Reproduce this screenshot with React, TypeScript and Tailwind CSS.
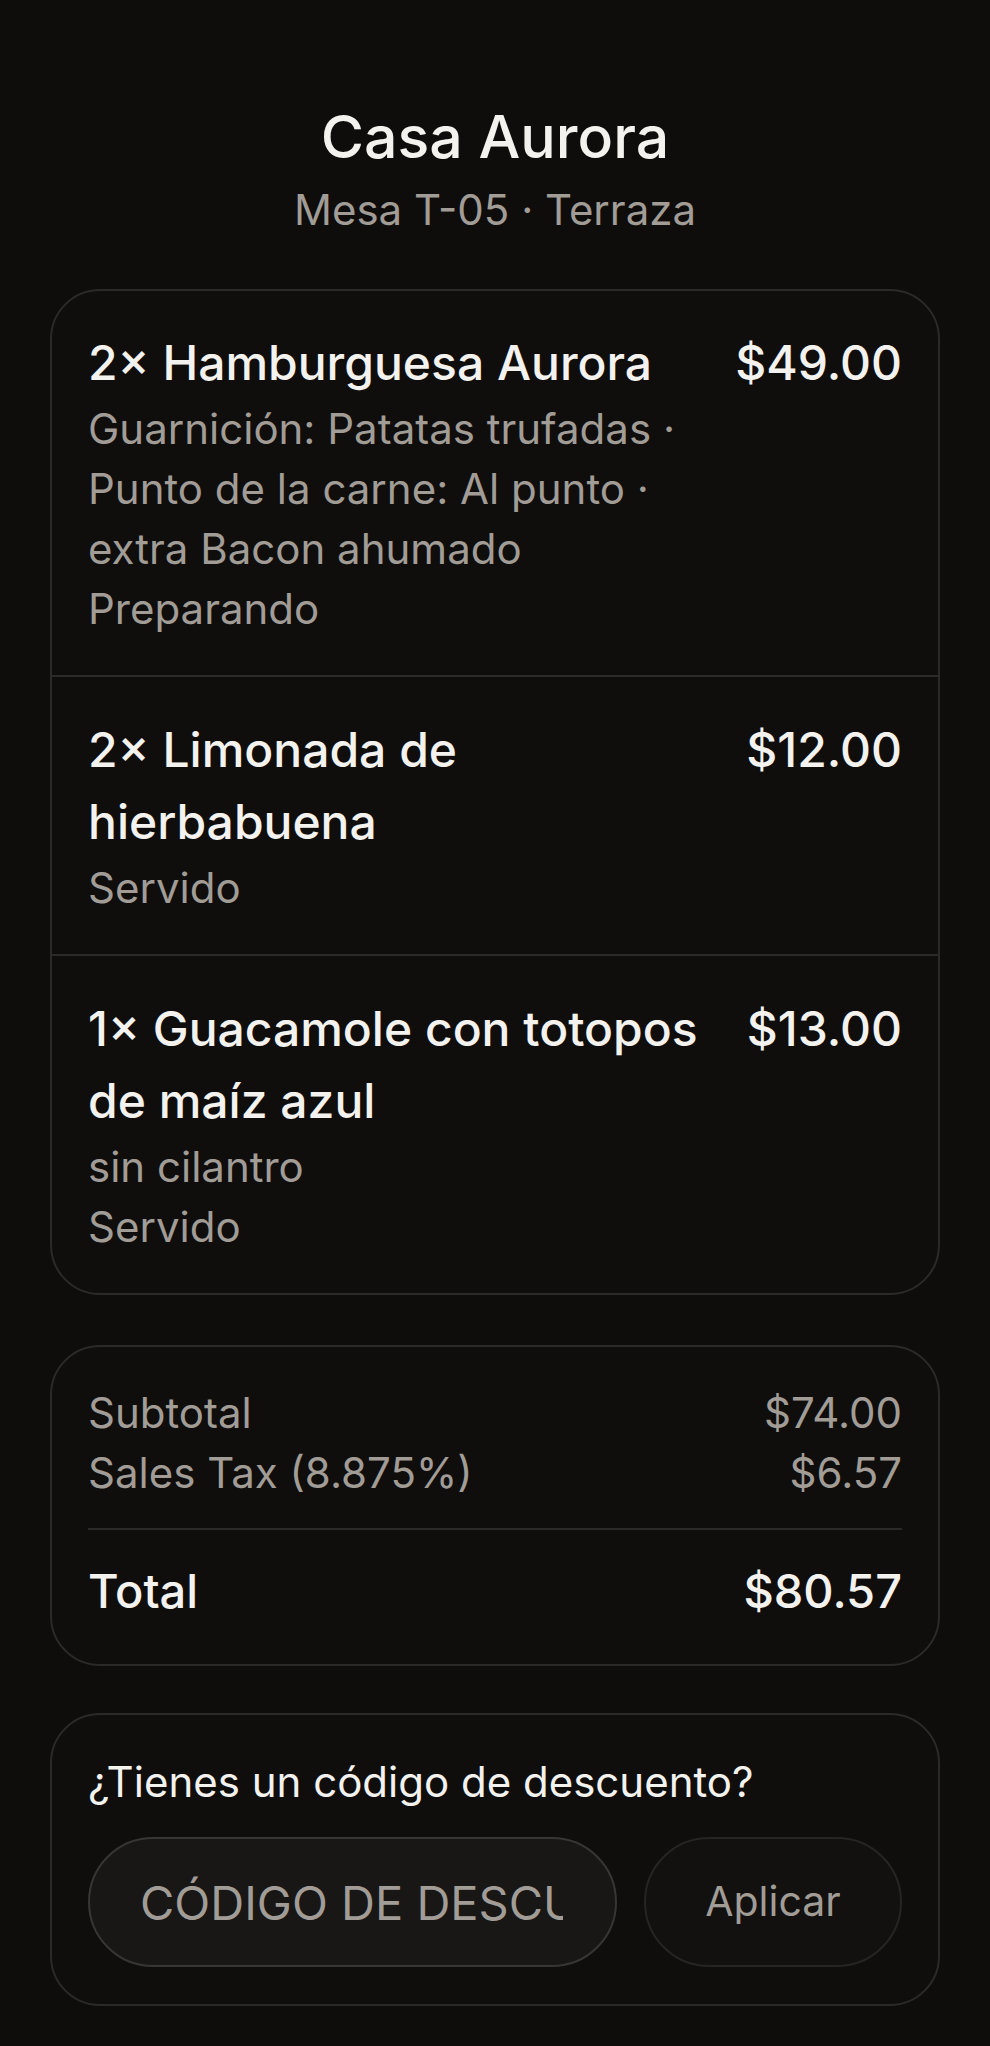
const items = [
  {
    qty: 2,
    name: "Hamburguesa Aurora",
    price: "$49.00",
    notes: ["Guarnición: Patatas trufadas · Punto de la carne: Al punto · extra Bacon ahumado"],
    status: "Preparando",
  },
  {
    qty: 2,
    name: "Limonada de hierbabuena",
    price: "$12.00",
    notes: [],
    status: "Servido",
  },
  {
    qty: 1,
    name: "Guacamole con totopos de maíz azul",
    price: "$13.00",
    notes: ["sin cilantro"],
    status: "Servido",
  },
];

const OrderItem = ({
  qty,
  name,
  price,
  notes,
  status,
}: {
  qty: number;
  name: string;
  price: string;
  notes: string[];
  status: string;
}) => {
  return (
    <div className="flex justify-between gap-[40px] px-[36px] pt-[37px] pb-[36px] border-t-2 border-[#2b2a28] first:border-t-0 first:pt-[36px]">
      <div className="flex-1 min-w-0">
        <p className="text-[48px] leading-[72px] font-medium text-[#f4f2ee]">
          {qty}× {name}
        </p>
        {notes.map((n) => (
          <p key={n} className="text-[42px] leading-[60px] text-[#a19c96]">
            {n}
          </p>
        ))}
        <p className="text-[42px] leading-[60px] text-[#a19c96]">{status}</p>
      </div>
      <p className="text-[48px] leading-[72px] font-medium text-[#f4f2ee] whitespace-nowrap">
        {price}
      </p>
    </div>
  );
};

export default function App() {
  return (
    <div className="min-h-screen bg-[#0e0d0c] px-[50px] pt-[97px] pb-[40px] font-['Inter',sans-serif]">
      <div className="text-center mb-[49px]">
        <h1 className="text-[59px] leading-[80px] font-medium text-[#f4f2ee]">Casa Aurora</h1>
        <p className="mt-[3px] text-[42px] leading-[60px] text-[#a19c96]">Mesa T-05 · Terraza</p>
      </div>

      <div className="rounded-[50px] border-2 border-[#2b2a28] bg-[#0f0e0d]">
        {items.map((it) => (
          <OrderItem key={it.name} {...it} />
        ))}
      </div>

      <div className="mt-[50px] rounded-[50px] border-2 border-[#2b2a28] bg-[#0f0e0d] px-[36px] pt-[36px] pb-[37px]">
        <div className="flex justify-between text-[42px] leading-[60px] text-[#a19c96]">
          <span>Subtotal</span>
          <span>$74.00</span>
        </div>
        <div className="flex justify-between text-[42px] leading-[60px] text-[#a19c96]">
          <span>Sales Tax (8.875%)</span>
          <span>$6.57</span>
        </div>
        <div className="mt-[25px] border-t-2 border-[#2b2a28]"></div>
        <div className="flex justify-between pt-[25px] text-[47px] leading-[72px] font-medium text-[#f4f2ee]">
          <span>Total</span>
          <span>$80.57</span>
        </div>
      </div>

      <div className="mt-[47px] rounded-[50px] border-2 border-[#2b2a28] bg-[#0f0e0d] px-[36px] pt-[37px] pb-[37px]">
        <p className="mb-[25px] text-[42px] leading-[60px] text-[#f4f2ee]">¿Tienes un código de descuento?</p>
        <div className="flex gap-[27px]">
          <input
            type="text"
            placeholder="CÓDIGO DE DESCUENTO"
            className="min-w-0 flex-1 h-[130px] rounded-full border-2 border-[#383634] bg-[#181716] pl-[50px] pr-[52px] text-[47px] text-[#f4f2ee] placeholder:text-[#a19c96] outline-none"
          />
          <button className="w-[258px] h-[130px] rounded-full border-2 border-[#262523] bg-[#121110] text-[41px] text-[#a19c96]">
            Aplicar
          </button>
        </div>
      </div>
    </div>
  );
}
